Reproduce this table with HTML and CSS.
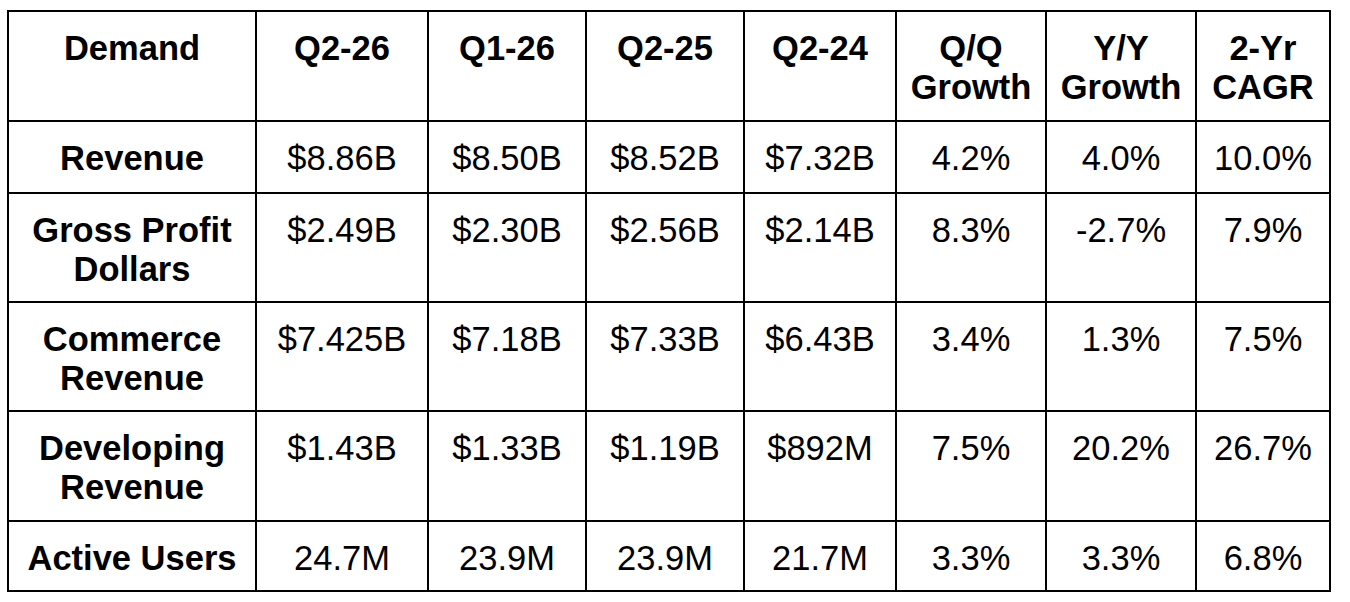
FILE: index.html
```html
<!DOCTYPE html>
<html lang="en">
<head>
<meta charset="utf-8">
<title>Demand</title>
<link rel="stylesheet" href="styles.css">
</head>
<body>
<div class="grid">
  <div class="cell head">Demand</div>
  <div class="cell head">Q2-26</div>
  <div class="cell head">Q1-26</div>
  <div class="cell head">Q2-25</div>
  <div class="cell head">Q2-24</div>
  <div class="cell head">Q/Q<br>Growth</div>
  <div class="cell head">Y/Y<br>Growth</div>
  <div class="cell head">2-Yr<br>CAGR</div>

  <div class="cell label">Revenue</div>
  <div class="cell">$8.86B</div>
  <div class="cell">$8.50B</div>
  <div class="cell">$8.52B</div>
  <div class="cell">$7.32B</div>
  <div class="cell">4.2%</div>
  <div class="cell">4.0%</div>
  <div class="cell">10.0%</div>

  <div class="cell label">Gross Profit<br>Dollars</div>
  <div class="cell">$2.49B</div>
  <div class="cell">$2.30B</div>
  <div class="cell">$2.56B</div>
  <div class="cell">$2.14B</div>
  <div class="cell">8.3%</div>
  <div class="cell">-2.7%</div>
  <div class="cell">7.9%</div>

  <div class="cell label">Commerce<br>Revenue</div>
  <div class="cell">$7.425B</div>
  <div class="cell">$7.18B</div>
  <div class="cell">$7.33B</div>
  <div class="cell">$6.43B</div>
  <div class="cell">3.4%</div>
  <div class="cell">1.3%</div>
  <div class="cell">7.5%</div>

  <div class="cell label">Developing<br>Revenue</div>
  <div class="cell">$1.43B</div>
  <div class="cell">$1.33B</div>
  <div class="cell">$1.19B</div>
  <div class="cell">$892M</div>
  <div class="cell">7.5%</div>
  <div class="cell">20.2%</div>
  <div class="cell">26.7%</div>

  <div class="cell label">Active Users</div>
  <div class="cell">24.7M</div>
  <div class="cell">23.9M</div>
  <div class="cell">23.9M</div>
  <div class="cell">21.7M</div>
  <div class="cell">3.3%</div>
  <div class="cell">3.3%</div>
  <div class="cell">6.8%</div>
</div>
</body>
</html>
```
FILE: styles.css
```css
html, body {
  margin: 0;
  padding: 0;
  background: #ffffff;
}

body {
  font-family: "Liberation Sans", Arial, sans-serif;
  color: #000000;
}

.grid {
  display: grid;
  grid-template-columns: 246px 170px 156px 156px 150px 148px 148px 132px;
  grid-template-rows: 108px 70px 107px 107px 108px 68px;
  gap: 2px;
  padding: 2px;
  background: #000000;
  width: max-content;
  margin: 10px 0 0 7px;
}

.cell {
  background: #ffffff;
  font-size: 34.5px;
  line-height: 39px;
  text-align: center;
  padding-top: 17px;
  box-sizing: border-box;
  white-space: nowrap;
}

.head,
.label {
  font-weight: bold;
}
```
